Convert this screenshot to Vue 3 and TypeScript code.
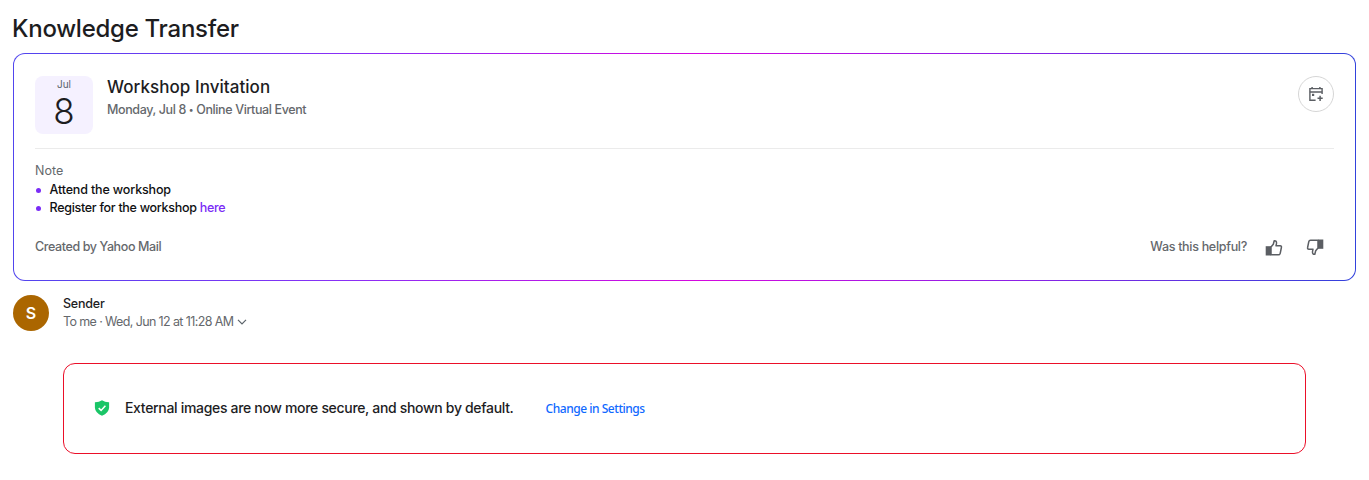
<script setup lang="ts">
const notes: { text: string; link?: string }[] = [
  { text: 'Attend the workshop' },
  { text: 'Register for the workshop', link: 'here' },
]
</script>

<template>
  <main class="page">
    <h1><span>Knowledge Transfer</span></h1>
    <section class="card">
      <header class="event">
        <div class="date">
          <span class="month">Jul</span>
          <span class="day">8</span>
        </div>
        <div class="info">
          <h2><span>Workshop Invitation</span></h2>
          <p><span class="when">Monday, Jul 8 <i>•</i> Online Virtual Event</span></p>
        </div>
        <button class="add" aria-label="Add to calendar">
          <svg width="16" height="16" viewBox="0 0 16 16">
            <path d="M7.6 14.2H1.9V2.6H14.1V8" fill="none" stroke="#5b5e63" stroke-width="1.4" />
            <path d="M1.9 5.9H14.1M4.1 1V3M11.9 1V3" fill="none" stroke="#5b5e63" stroke-width="1.5" />
            <path d="M4 7.8h2.2V10H4z" fill="#5b5e63" />
            <path d="M9.5 12.3H14.7M12.1 9.7V14.9" stroke="#5b5e63" stroke-width="1.5" />
          </svg>
        </button>
      </header>
      <div class="note">
        <p class="label"><span>Note</span></p>
        <ul>
          <li v-for="n in notes" :key="n.text">
            <span>{{ n.text }}<template v-if="n.link">&nbsp;<a>{{ n.link }}</a></template></span>
          </li>
        </ul>
      </div>
      <footer class="foot">
        <span class="created">Created by Yahoo Mail</span>
        <span class="helpful">Was this helpful?</span>
        <svg class="thumb" width="18" height="18" viewBox="0 0 18 18">
          <path d="M.7 7.2H6V16.5H.7z" fill="#5b5e63" />
          <path d="M6 15.8V8L8.3 5.3 9.2 1.7Q11.8 1.5 11.5 4.4L11 6.8H15.1Q16.8 6.8 16.4 8.5L15.2 14.3Q14.9 15.8 13.5 15.8Z" fill="none" stroke="#5b5e63" stroke-width="1.5" stroke-linejoin="round" />
        </svg>
        <svg class="thumb down" width="18" height="18" viewBox="0 0 18 18">
          <path d="M.7 7.2H6V16.5H.7z" fill="#5b5e63" />
          <path d="M6 15.8V8L8.3 5.3 9.2 1.7Q11.8 1.5 11.5 4.4L11 6.8H15.1Q16.8 6.8 16.4 8.5L15.2 14.3Q14.9 15.8 13.5 15.8Z" fill="none" stroke="#5b5e63" stroke-width="1.5" stroke-linejoin="round" />
        </svg>
      </footer>
    </section>
    <section class="sender">
      <div class="avatar">S</div>
      <div class="who">
        <p class="name"><span>Sender</span></p>
        <p class="meta">
          <span>To me · Wed, Jun 12 at 11:28 AM</span>
          <svg width="10" height="6" viewBox="0 0 10 6"><path d="M1 .8 5 4.8 9 .8" fill="none" stroke="#5b636a" stroke-width="1.2" /></svg>
        </p>
      </div>
    </section>
    <section class="notice">
      <svg class="shield" width="16" height="16" viewBox="0 0 16 16">
        <path d="M8 .3Q11 2.3 15.1 2.2V7.8Q14.8 13 8 15.8 1.2 13 .9 7.8V2.2Q5 2.3 8 .3Z" fill="#1ac567" />
        <path d="M4.7 8.1 7.1 10.4 11.4 5.7" fill="none" stroke="#fff" stroke-width="1.5" />
      </svg>
      <span class="secure">External images are now more secure, and shown by default.</span>
      <a class="change">Change in Settings</a>
    </section>
  </main>
</template>

<style scoped>
* { box-sizing: border-box; margin: 0; padding: 0; }
.page {
  height: 480px;
  padding: 14px 13px 0;
  background: #fff;
  color: #1d1d1f;
  font-family: Inter, "Liberation Sans", sans-serif;
  font-size: 13px;
  line-height: 18px;
  white-space: nowrap;
}
h1 { height: 39px; margin-left: -1px; font-size: 24px; line-height: 30px; font-weight: 450; letter-spacing: -0.27px; }
.card {
  width: 1343px;
  height: 228px;
  padding: 22px 21px 0;
  border: 1px solid transparent;
  border-radius: 12px;
  background: linear-gradient(#fff, #fff) padding-box,
    linear-gradient(90deg, #5145ee 0%, #8730f6 24%, #d408de 51%, #8b21e6 75%, #3242dc 100%) border-box;
}
.event { display: flex; height: 73px; border-bottom: 1px solid #ebebeb; }
.date { display: flex; flex-direction: column; align-items: center; width: 58px; height: 58px; border-radius: 8px; background: #f5f1ff; }
.month { height: 17px; font-size: 10px; line-height: 17px; color: #5b636a; }
.day { font-size: 35px; line-height: 37px; font-weight: 350; }
.info { margin-left: 14px; }
h2 { font-size: 17px; line-height: 22px; font-weight: 500; letter-spacing: 0.05px; }
.info p { margin-top: 3px; font-size: 12.5px; color: #65686c; font-weight: 500; letter-spacing: -0.42px; }
.when i { font-size: 9px; font-style: normal; vertical-align: 1px; }
.when { letter-spacing: -0.38px; }
.add { display: flex; align-items: center; justify-content: center; width: 36px; height: 36px; margin-left: auto; border: 1px solid #d6d6d6; border-radius: 50%; background: #fff; }
.note { margin-top: 13px; }
.label { height: 19px; color: #65686c; font-size: 12.5px; }
ul { list-style: none; }
li { display: flex; align-items: center; height: 18px; font-size: 12.5px; font-weight: 500; color: #101012; letter-spacing: -0.15px; }
li + li { letter-spacing: -0.29px; }
li::before { content: ""; width: 5px; height: 5px; margin: 1px 8.5px 0 1px; border-radius: 50%; background: #7a2cf6; flex: none; }
li a { color: #7a2cf6; }
.foot { display: flex; align-items: center; height: 20px; margin-top: 20px; color: #65686c; font-size: 12.5px; }
.created { font-weight: 450; letter-spacing: -0.39px; }
.helpful { margin-left: auto; margin-right: 18px; font-weight: 450; letter-spacing: -0.3px; }
.thumb { margin-top: 2px; }
.down { margin: 0 10px 0 23px; transform: rotate(180deg); }
.sender { display: flex; margin-top: 14px; height: 36px; }
.avatar { width: 36px; height: 36px; border-radius: 50%; background: #ab6600; color: #fff; text-align: center; line-height: 37px; font-size: 16px; font-weight: 600; }
.who { margin-left: 14px; }
.name { font-size: 12.5px; font-weight: 500; letter-spacing: -0.22px; }
.meta { display: flex; align-items: center; gap: 4px; font-size: 12.5px; color: #65686c; letter-spacing: -0.62px; }
.notice { display: flex; align-items: center; width: 1243px; height: 91px; margin: 32px 0 0 50px; padding-left: 30px; border: 1px solid #eb0f29; border-radius: 12px; }
.shield { margin-top: -2px; }
.secure { margin: -2px 0 0 15px; font-size: 14px; font-weight: 450; letter-spacing: -0.32px; }
.change { margin-left: 32px; font: 500 12px/18px "Noto Sans", sans-serif; letter-spacing: -0.47px; color: #0f69ff; }
</style>
